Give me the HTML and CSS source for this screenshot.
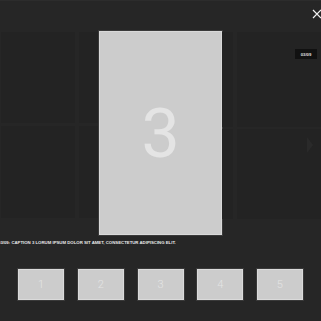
FILE: index.html
```html
<!DOCTYPE html>
<html lang="en">
<head>
    <meta charset="UTF-8">
    <meta name="viewport" content="width=device-width, initial-scale=1.0">
    <title>Gallery Lightbox</title>
    <link rel="stylesheet" href="styles.css">
</head>
<body>
    <div class="lightbox">
        <button class="close" aria-label="Close">
            <svg width="10" height="10" viewBox="0 0 10 10">
                <path d="M1 1 L9 9 M9 1 L1 9" stroke="#f2f2f2" stroke-width="1.2" fill="none"/>
            </svg>
        </button>

        <div class="stage">
            <div class="side side-left">
                <div class="tile"></div>
                <div class="tile"></div>
                <div class="tile"></div>
                <div class="tile"></div>
            </div>

            <div class="photo">
                <span>3</span>
            </div>

            <div class="side side-right">
                <div class="tile"></div>
                <div class="tile"></div>
                <div class="tile"></div>
                <div class="tile"></div>
            </div>

            <span class="counter">03/09</span>
            <span class="arrow"></span>
        </div>

        <p class="caption">03/09: Caption 3 lorum ipsum dolor sit amet, consectetur adipiscing elit.</p>

        <div class="thumbs">
            <div class="thumb">1</div>
            <div class="thumb">2</div>
            <div class="thumb">3</div>
            <div class="thumb">4</div>
            <div class="thumb">5</div>
        </div>
    </div>
</body>
</html>
```

FILE: styles.css
```css
body {
    margin: 0;
    padding: 0;
    background-color: #262626;
    font-family: 'Liberation Sans', Arial, sans-serif;
    overflow: hidden;
}

.lightbox {
    position: relative;
    width: 321px;
    height: 321px;
    border-top: 1px solid #2c2c2c;
    box-sizing: border-box;
}

.close {
    position: absolute;
    top: 8px;
    right: -1px;
    padding: 0;
    border: none;
    background: none;
    width: 10px;
    height: 10px;
    cursor: pointer;
}

.close svg {
    display: block;
}

.stage {
    position: relative;
    display: flex;
    align-items: flex-start;
    padding-top: 30px;
}

.side {
    display: grid;
    grid-template-rows: 91px 92px;
    row-gap: 3px;
    margin-top: 1px;
}

.side-left {
    width: 99px;
    grid-template-columns: 74px 19px;
    column-gap: 4px;
    padding-left: 1px;
    box-sizing: border-box;
}

.side-right {
    width: 99px;
    grid-template-columns: 11px 84px;
    column-gap: 4px;
    grid-template-rows: 95px 90px;
    row-gap: 2px;
}

.tile {
    background-color: #232323;
}

.photo {
    width: 123px;
    height: 204px;
    box-sizing: border-box;
    background-color: #cccccc;
    border: 1px solid #d9d9d9;
    box-shadow: 0 0 0 1px #3a3a3a;
    display: flex;
    align-items: center;
    justify-content: center;
}

.photo span {
    font-family: Roboto, 'Open Sans', sans-serif;
    font-weight: 400;
    font-size: 68px;
    color: #e4e4e4;
    line-height: 1;
    margin-top: 2px;
}

.counter {
    position: absolute;
    top: 48px;
    right: 4px;
    width: 22px;
    height: 10px;
    background-color: #111111;
    color: #e0e0e0;
    font-size: 4.2px;
    font-weight: bold;
    display: flex;
    align-items: center;
    justify-content: center;
}

.arrow {
    position: absolute;
    top: 136px;
    right: 8px;
    width: 0;
    height: 0;
    border-top: 8px solid transparent;
    border-bottom: 8px solid transparent;
    border-left: 6px solid #2a2a2a;
}

.caption {
    margin: 5px 0 0 -2px;
    font-size: 4.3px;
    font-weight: bold;
    text-transform: uppercase;
    color: #e8e8e8;
    white-space: nowrap;
    line-height: 6px;
}

.thumbs {
    display: flex;
    justify-content: center;
    gap: 13.7px;
    margin-top: 23px;
}

.thumb {
    width: 46px;
    height: 31px;
    box-sizing: border-box;
    background-color: #cccccc;
    border: 1px solid #dadada;
    box-shadow: 0 0 0 1px #3a3a3a;
    display: flex;
    align-items: center;
    justify-content: center;
    font-family: Roboto, 'Open Sans', sans-serif;
    font-weight: 300;
    font-size: 11px;
    color: #e4e4e4;
}
```
